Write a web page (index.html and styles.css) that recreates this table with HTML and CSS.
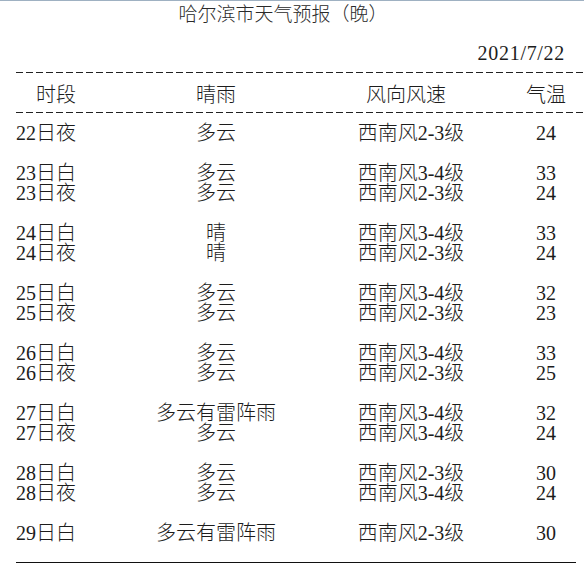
FILE: index.html
```html
<!DOCTYPE html>
<html lang="zh-CN">
<head>
<meta charset="utf-8">
<title>哈尔滨市天气预报（晚）</title>
<link rel="stylesheet" href="styles.css">
</head>
<body>
<div class="page">
  <div class="title">哈尔滨市天气预报（晚）</div>
  <div class="date">2021/7/22</div>
  <div class="dash"></div>
  <div class="row head">
    <span class="c1">时段</span><span class="c2">晴雨</span><span class="c3">风向风速</span><span class="c4">气温</span>
  </div>
  <div class="dash dash2"></div>
  <div class="body">
    <div class="group">
      <div class="row"><span class="c1">22日夜</span><span class="c2">多云</span><span class="c3">西南风2-3级</span><span class="c4">24</span></div>
    </div>
    <div class="group">
      <div class="row"><span class="c1">23日白</span><span class="c2">多云</span><span class="c3">西南风3-4级</span><span class="c4">33</span></div>
      <div class="row"><span class="c1">23日夜</span><span class="c2">多云</span><span class="c3">西南风2-3级</span><span class="c4">24</span></div>
    </div>
    <div class="group">
      <div class="row"><span class="c1">24日白</span><span class="c2">晴</span><span class="c3">西南风3-4级</span><span class="c4">33</span></div>
      <div class="row"><span class="c1">24日夜</span><span class="c2">晴</span><span class="c3">西南风2-3级</span><span class="c4">24</span></div>
    </div>
    <div class="group">
      <div class="row"><span class="c1">25日白</span><span class="c2">多云</span><span class="c3">西南风3-4级</span><span class="c4">32</span></div>
      <div class="row"><span class="c1">25日夜</span><span class="c2">多云</span><span class="c3">西南风2-3级</span><span class="c4">23</span></div>
    </div>
    <div class="group">
      <div class="row"><span class="c1">26日白</span><span class="c2">多云</span><span class="c3">西南风3-4级</span><span class="c4">33</span></div>
      <div class="row"><span class="c1">26日夜</span><span class="c2">多云</span><span class="c3">西南风2-3级</span><span class="c4">25</span></div>
    </div>
    <div class="group">
      <div class="row"><span class="c1">27日白</span><span class="c2">多云有雷阵雨</span><span class="c3">西南风3-4级</span><span class="c4">32</span></div>
      <div class="row"><span class="c1">27日夜</span><span class="c2">多云</span><span class="c3">西南风3-4级</span><span class="c4">24</span></div>
    </div>
    <div class="group">
      <div class="row"><span class="c1">28日白</span><span class="c2">多云</span><span class="c3">西南风2-3级</span><span class="c4">30</span></div>
      <div class="row"><span class="c1">28日夜</span><span class="c2">多云</span><span class="c3">西南风3-4级</span><span class="c4">24</span></div>
    </div>
    <div class="group">
      <div class="row"><span class="c1">29日白</span><span class="c2">多云有雷阵雨</span><span class="c3">西南风2-3级</span><span class="c4">30</span></div>
    </div>
  </div>
  <div class="solid"></div>
</div>
</body>
</html>
```
FILE: styles.css
```css
html, body {
  margin: 0;
  padding: 0;
  background: #ffffff;
}
.page {
  width: 584px;
  height: 565px;
  overflow: hidden;
  border-top: 1px solid #9fb1c2;
  box-sizing: border-box;
  font-family: "Liberation Serif", "Noto Sans CJK SC", serif;
  font-weight: 300;
  font-size: 20px;
  color: #1c1c1c;
}
.title {
  width: 566px;
  height: 27px;
  line-height: 27px;
  text-align: center;
  font-size: 19px;
  color: #2a2a2a;
}
.date {
  margin-top: 15px;
  height: 20px;
  line-height: 20px;
  text-align: right;
  padding-right: 19px;
  letter-spacing: 0.7px;
}
.dash {
  margin-top: 9px;
  margin-left: 16px;
  height: 1px;
  background: repeating-linear-gradient(to right, #222 0 7px, transparent 7px 10px);
}
.dash2 {
  margin-top: 7px;
}
.row {
  display: grid;
  grid-template-columns: 120px 160px 230px 40px;
  padding-left: 16px;
  height: 20px;
  line-height: 20px;
  white-space: nowrap;
}
.head {
  margin-top: 12px;
}
.c1 { text-align: left; }
.c2, .c3, .c4 { text-align: center; }
.head .c1 { padding-left: 20px; }
.head .c3 { padding-right: 10px; }
.body {
  margin-top: 10px;
  display: flex;
  flex-direction: column;
  gap: 20px;
}
.solid {
  margin-top: 19px;
  margin-left: 16px;
  width: 560px;
  height: 1px;
  background: #111;
}
```
